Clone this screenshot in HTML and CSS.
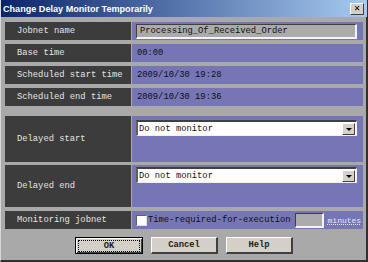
FILE: index.html
```html
<!DOCTYPE html>
<html>
<head>
<meta charset="utf-8">
<link rel="stylesheet" href="styles.css">
</head>
<body>
<div class="win">
  <div class="titlebar">
    <span class="title">Change Delay Monitor Temporarily</span>
    <span class="close">&#x2715;</span>
  </div>
  <div class="content">
    <div class="rows">
      <div class="row">
        <div class="lbl">Jobnet name</div>
        <div class="val"><div class="field">Processing_Of_Received_Order</div></div>
      </div>
      <div class="row">
        <div class="lbl">Base time</div>
        <div class="val text">00:00</div>
      </div>
      <div class="row">
        <div class="lbl">Scheduled start time</div>
        <div class="val text">2009/10/30 19:28</div>
      </div>
      <div class="row">
        <div class="lbl">Scheduled end time</div>
        <div class="val text">2009/10/30 19:36</div>
      </div>
      <div class="row tall first-tall">
        <div class="lbl">Delayed start</div>
        <div class="val top"><div class="select"><span class="opt">Do not monitor</span><span class="drop"></span></div></div>
      </div>
      <div class="row tall second-tall">
        <div class="lbl">Delayed end</div>
        <div class="val top"><div class="select"><span class="opt">Do not monitor</span><span class="drop"></span></div></div>
      </div>
      <div class="row">
        <div class="lbl">Monitoring jobnet</div>
        <div class="val check">
          <span class="box"></span>
          <span class="cklabel">Time-required-for-execution</span>
          <span class="mini"></span>
          <span class="unit">minutes</span>
        </div>
      </div>
    </div>
    <div class="buttons">
      <div class="btn default"><span class="focus">OK</span></div>
      <div class="btn">Cancel</div>
      <div class="btn">Help</div>
    </div>
  </div>
</div>
</body>
</html>
```

FILE: styles.css
```css
html, body {
  margin: 0;
  padding: 0;
  background: #a9a9a9;
}
.win {
  width: 368px;
  height: 262px;
  box-sizing: border-box;
  border-left: 1px solid #d8d8d8;
  border-right: 2px solid #303030;
  border-bottom: 2px solid #303030;
  background: #a9a9a9;
  display: flex;
  flex-direction: column;
}
.titlebar {
  height: 17px;
  display: flex;
  align-items: center;
  justify-content: space-between;
  background: linear-gradient(to right, #0a246a, #a6caf0);
  padding: 0 3px 0 2px;
  margin-right: -1px;
}
.title {
  color: #fff;
  font-family: "Liberation Sans", sans-serif;
  font-weight: bold;
  font-size: 9.1px;
}
.close {
  width: 14px;
  height: 12px;
  box-sizing: border-box;
  background: #d4d0c8;
  border-top: 1px solid #fff;
  border-left: 1px solid #fff;
  border-right: 1px solid #404040;
  border-bottom: 1px solid #404040;
  font-family: "DejaVu Sans", sans-serif;
  font-size: 8px;
  font-weight: bold;
  line-height: 10px;
  text-align: center;
  color: #000;
}
.content {
  flex: 1;
  display: flex;
  flex-direction: column;
  padding: 5px 3px 0 4px;
}
.rows {
  display: flex;
  flex-direction: column;
  gap: 4px;
}
.row {
  display: grid;
  grid-template-columns: 126px 1fr;
  column-gap: 1px;
  height: 18px;
  font-family: "Liberation Mono", monospace;
  font-size: 8.8px;
}
.row.tall { height: 46px; }
.row.first-tall { margin-top: 6px; }
.row.second-tall { height: 42px; margin-top: -1px; }
.lbl {
  background: #3c3c3c;
  color: #e4e4e4;
  padding-left: 12px;
  display: flex;
  align-items: center;
}
.val {
  background: #7676b6;
  color: #101010;
  display: flex;
  align-items: center;
  padding-left: 4px;
}
.val.text { padding-left: 5px; }
.val.top { align-items: flex-start; padding-top: 4px; }
.second-tall .val.top { padding-top: 2px; }
.field {
  width: 221px;
  height: 15px;
  box-sizing: border-box;
  background: #ababab;
  border-top: 1px solid #404040;
  border-left: 1px solid #404040;
  border-right: 2px solid #f4f4f4;
  border-bottom: 2px solid #f4f4f4;
  padding-left: 3px;
  display: flex;
  align-items: center;
}
.select {
  width: 221px;
  height: 16px;
  box-sizing: border-box;
  background: #fff;
  border-top: 2px solid #404040;
  border-left: 2px solid #606060;
  border-right: 1px solid #f0f0f0;
  border-bottom: 1px solid #f0f0f0;
  display: flex;
  align-items: center;
  justify-content: space-between;
  padding-left: 1px;
  padding-right: 1px;
}
.drop {
  width: 13px;
  height: 12px;
  box-sizing: border-box;
  background: #d4d0c8;
  border-top: 1px solid #fff;
  border-left: 1px solid #fff;
  border-right: 1px solid #404040;
  border-bottom: 1px solid #404040;
  position: relative;
}
.drop::after {
  content: "";
  position: absolute;
  left: 3px;
  top: 4px;
  border-left: 3px solid transparent;
  border-right: 3px solid transparent;
  border-top: 3px solid #000;
}
.check { gap: 0; }
.box {
  width: 11px;
  height: 11px;
  box-sizing: border-box;
  background: #fff;
  border-top: 1px solid #606060;
  border-left: 1px solid #606060;
  border-right: 1px solid #e0e0e0;
  border-bottom: 1px solid #e0e0e0;
  margin-right: 1px;
}
.cklabel { color: #101010; }
.mini {
  width: 29px;
  height: 15px;
  box-sizing: border-box;
  background: #ababab;
  border-top: 1px solid #404040;
  border-left: 1px solid #404040;
  border-right: 2px solid #f4f4f4;
  border-bottom: 2px solid #f4f4f4;
  margin-left: 4px;
}
.unit {
  color: #e4e4f4;
  font-size: 8px;
  margin-left: 4px;
  text-decoration: underline;
  text-decoration-style: dotted;
}
.buttons {
  display: flex;
  justify-content: center;
  gap: 8px;
  margin-top: 8px;
}
.btn {
  width: 67px;
  height: 17px;
  box-sizing: border-box;
  background: #d4d0c8;
  border-top: 1px solid #fff;
  border-left: 1px solid #fff;
  border-right: 2px solid #404040;
  border-bottom: 2px solid #404040;
  font-family: "Liberation Mono", monospace;
  font-size: 8.8px;
  font-weight: bold;
  color: #202020;
  display: flex;
  align-items: center;
  justify-content: center;
}
.btn.default {
  border: 1px solid #000;
  box-shadow: inset 1px 1px 0 #fff, inset -1px -1px 0 #404040;
  width: 68px;
}
.focus {
  width: 60px;
  height: 10px;
  border: 1px dotted #000;
  display: flex;
  align-items: center;
  justify-content: center;
}
```
